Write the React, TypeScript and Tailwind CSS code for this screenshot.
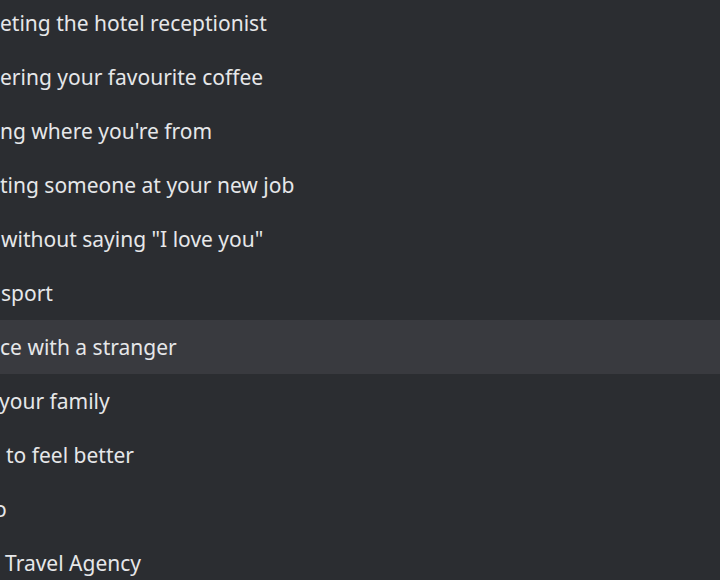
const ROWS: { text: string; indent: string; active?: boolean }[] = [
  { text: "eting the hotel receptionist", indent: "pl-0" },
  { text: "ering your favourite coffee", indent: "pl-0" },
  { text: "ng where you're from", indent: "pl-0" },
  { text: "ting someone at your new job", indent: "pl-0" },
  { text: "without saying \"I love you\"", indent: "pl-[1px]" },
  { text: "sport", indent: "pl-[1px]" },
  { text: "ce with a stranger", indent: "pl-0", active: true },
  { text: "your family", indent: "-ml-[1px]" },
  { text: "to feel better", indent: "pl-[6px]" },
  { text: "o", indent: "-ml-[6px]" },
  { text: "Travel Agency", indent: "pl-[5px]" },
];

export default function App() {
  return (
    <div
      className="w-[720px] h-[580px] overflow-hidden bg-[#2b2d31] text-[#e6e7e9]"
      style={{ fontFamily: '"Noto Sans", "Open Sans", sans-serif' }}
    >
      <ul className="-mt-[4px] flex flex-col">
        {ROWS.map((r, i) => (
          <li
            key={i}
            className={
              "h-[54px] pt-[2px] flex items-center whitespace-pre text-[21px] " +
              (r.active ? "bg-[#393a3f]" : "")
            }
          >
            <span className={r.indent}>{r.text}</span>
          </li>
        ))}
      </ul>
    </div>
  );
}
